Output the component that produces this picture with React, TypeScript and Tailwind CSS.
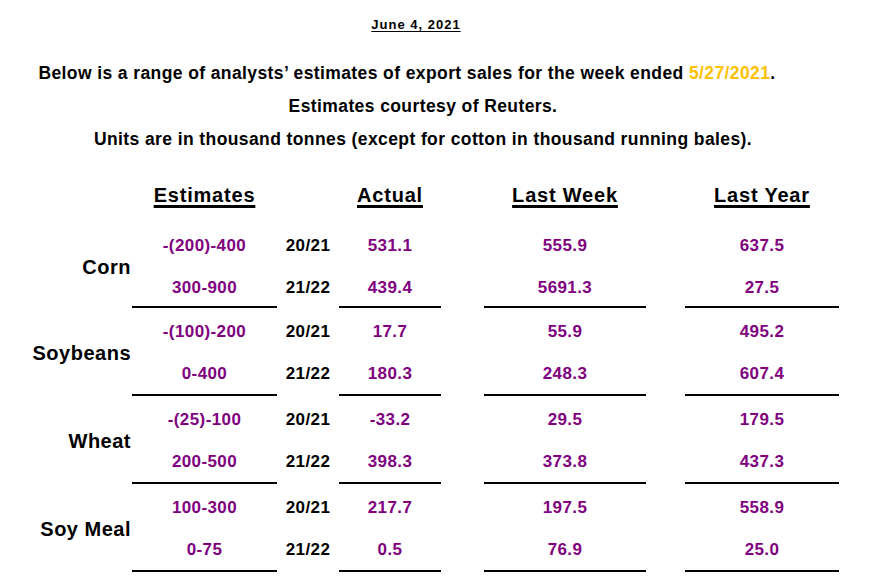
import React from "react";

const P = "text-[#800080]";

type Block = {
  label: string;
  rows: { est: string; yr: string; act: string; lw: string; ly: string }[];
};

const data: Block[] = [
  {
    label: "Corn",
    rows: [
      { est: "-(200)-400", yr: "20/21", act: "531.1", lw: "555.9", ly: "637.5" },
      { est: "300-900", yr: "21/22", act: "439.4", lw: "5691.3", ly: "27.5" },
    ],
  },
  {
    label: "Soybeans",
    rows: [
      { est: "-(100)-200", yr: "20/21", act: "17.7", lw: "55.9", ly: "495.2" },
      { est: "0-400", yr: "21/22", act: "180.3", lw: "248.3", ly: "607.4" },
    ],
  },
  {
    label: "Wheat",
    rows: [
      { est: "-(25)-100", yr: "20/21", act: "-33.2", lw: "29.5", ly: "179.5" },
      { est: "200-500", yr: "21/22", act: "398.3", lw: "373.8", ly: "437.3" },
    ],
  },
  {
    label: "Soy Meal",
    rows: [
      { est: "100-300", yr: "20/21", act: "217.7", lw: "197.5", ly: "558.9" },
      { est: "0-75", yr: "21/22", act: "0.5", lw: "76.9", ly: "25.0" },
    ],
  },
];

const COLS = "grid grid-cols-[132px_145px_62px_102px_43px_162px_39px_154px]";

function DataRow({ r }: { r: Block["rows"][number] }) {
  const cell = "h-[42px] flex items-center justify-center text-[17px] font-bold tracking-[0.4px]";
  return (
    <div className={COLS}>
      <div />
      <div className={`${cell} ${P}`}>{r.est}</div>
      <div className={`${cell} text-black`}>{r.yr}</div>
      <div className={`${cell} ${P}`}>{r.act}</div>
      <div />
      <div className={`${cell} ${P}`}>{r.lw}</div>
      <div />
      <div className={`${cell} ${P}`}>{r.ly}</div>
    </div>
  );
}

function Lines({ first }: { first: boolean }) {
  return (
    <div className={`${COLS} h-[2px] ${first ? "mt-[-3px]" : "mt-[-1px]"}`}>
      <div />
      <div className="bg-black" />
      <div />
      <div className="bg-black" />
      <div />
      <div className="bg-black" />
      <div />
      <div className="bg-black" />
    </div>
  );
}

function BlockView({ b, first }: { b: Block; first: boolean }) {
  return (
    <div>
      <div className={`relative ${first ? "pt-[5px]" : "pt-[3px]"}`}>
        <DataRow r={b.rows[0]} />
        <DataRow r={b.rows[1]} />
        <div
          className={`absolute left-0 bottom-0 w-[132px] flex items-center justify-end pr-[1px] text-[20px] font-bold tracking-[0.5px] text-black ${
            first ? "top-[4px]" : "top-[2px]"
          }`}
        >
          {b.label}
        </div>
      </div>
      <Lines first={first} />
    </div>
  );
}

export default function App() {
  const head = "flex justify-center text-[20px] font-bold underline decoration-[3px] underline-offset-[3px] tracking-[0.8px] text-black";
  const line = "text-[17.5px] font-bold leading-[20px] tracking-[0.4px]";
  return (
    <div
      className="w-[870px] h-[585px] bg-white overflow-hidden"
      style={{ fontFamily: '"Liberation Sans", Arial, sans-serif' }}
    >
      <div className="w-[846px] pt-[17px] flex flex-col items-center text-black">
        <div className="text-[13px] font-bold underline underline-offset-[2px] tracking-[1px] leading-[16px] pr-[14px]">
          June 4, 2021
        </div>
        <div className={`mt-[30px] pr-[32px] ${line}`}>
          Below is a range of analysts’ estimates of export sales for the week ended{" "}
          <span className="text-[#FFC000]">5/27/2021</span>.
        </div>
        <div className={`mt-[13px] ${line}`}>Estimates courtesy of Reuters.</div>
        <div className={`mt-[13px] ${line}`}>
          Units are in thousand tonnes (except for cotton in thousand running bales).
        </div>
      </div>
      <div className={`${COLS} mt-[31px] h-[26px] items-center`}>
        <div />
        <div className={head}>Estimates</div>
        <div />
        <div className={head}>Actual</div>
        <div />
        <div className={head}>Last Week</div>
        <div />
        <div className={head}>Last Year</div>
      </div>
      <div className="mt-[14px]">
        {data.map((b, i) => (
          <BlockView key={b.label} b={b} first={i === 0} />
        ))}
      </div>
    </div>
  );
}
